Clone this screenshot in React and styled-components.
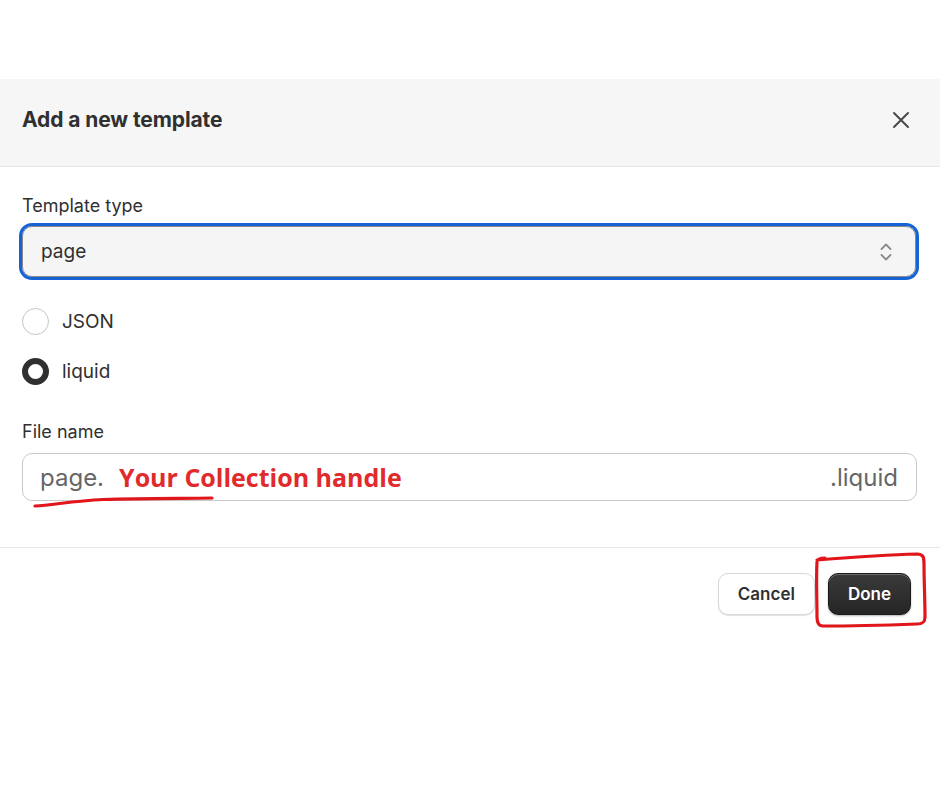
import React from 'react';
import styled, { createGlobalStyle } from 'styled-components';

const GlobalStyle = createGlobalStyle`
  html, body {
    margin: 0;
    padding: 0;
    background: #ffffff;
  }
  body {
    font-family: Inter, "Liberation Sans", sans-serif;
    color: #303030;
  }
  * { box-sizing: border-box; }
`;

function App() {
  return (
    <>
      <GlobalStyle />
      <Page>
        <Dialog>
          <Header>
            <Title>Add a new template</Title>
            <CloseButton aria-label="Close">
              <svg width="18" height="18" viewBox="0 0 18 18">
                <path d="M2 2 L16 16 M16 2 L2 16" stroke="#4a4a4a" strokeWidth="2" strokeLinecap="round" />
              </svg>
            </CloseButton>
          </Header>

          <Body>
            <Label>Template type</Label>
            <Select>
              <SelectValue>page</SelectValue>
              <svg width="14" height="22" viewBox="0 0 14 22">
                <path d="M2.5 8 L7 3.5 L11.5 8 M2.5 14 L7 18.5 L11.5 14" fill="none" stroke="#8a8a8a" strokeWidth="1.8" strokeLinecap="round" strokeLinejoin="round" />
              </svg>
            </Select>

            <RadioGroup>
              <RadioRow>
                <RadioDot />
                <RadioText>JSON</RadioText>
              </RadioRow>
              <RadioRow>
                <RadioDot checked />
                <RadioText>liquid</RadioText>
              </RadioRow>
            </RadioGroup>

            <Label spaced>File name</Label>
            <FileField>
              <Prefix>page.</Prefix>
              <Handle>Your Collection handle</Handle>
              <Suffix>.liquid</Suffix>
              <Underline width="190" height="16" viewBox="0 0 190 16">
                <path d="M2 12 C 20 11, 40 7, 70 5.5 C 110 4, 150 4.5, 179 4" fill="none" stroke="#e0161b" strokeWidth="3.2" strokeLinecap="round" />
              </Underline>
            </FileField>
          </Body>

          <Footer>
            <Button>Cancel</Button>
            <Marked>
              <Button primary>Done</Button>
              <Scribble width="116" height="80" viewBox="0 0 116 80">
                <path
                  d="M4 9 C 30 7, 70 4, 104 3 C 110 3, 111 6, 111 12 C 111 30, 112 50, 112 66 C 112 71, 110 73, 104 73 C 76 74, 40 75, 10 75 C 6 75, 4 72, 4 66 C 4 46, 3 28, 4 11 C 4 8, 6 7, 12 7"
                  fill="none"
                  stroke="#e0161b"
                  strokeWidth="3.2"
                  strokeLinecap="round"
                  strokeLinejoin="round"
                />
              </Scribble>
            </Marked>
          </Footer>
        </Dialog>
      </Page>
    </>
  );
}

export default App;

const Page = styled.div`
  padding-top: 79px;
  min-height: 788px;
  background: #ffffff;
`;

const Dialog = styled.div`
  background: #ffffff;
`;

const Header = styled.div`
  height: 88px;
  background: #f6f6f6;
  border-bottom: 1px solid #e6e6e6;
  display: flex;
  align-items: center;
  justify-content: space-between;
  padding: 0 25px 6px 22px;
`;

const Title = styled.h2`
  margin: 0;
  font-size: 21px;
  font-weight: 650;
  color: #303030;
  letter-spacing: -0.1px;
`;

const CloseButton = styled.button`
  width: 28px;
  height: 28px;
  border: none;
  background: transparent;
  padding: 0;
  display: flex;
  align-items: center;
  justify-content: center;
  cursor: pointer;
`;

const Body = styled.div`
  padding: 27px 23px 46px 22px;
  border-bottom: 1px solid #e6e6e6;
`;

const Label = styled.div`
  font-size: 18px;
  line-height: 24px;
  color: #303030;
  margin-top: ${(p) => (p.spaced ? '35px' : '0')};
`;

const Select = styled.div`
  margin: 8px 1px 0 0;
  height: 51px;
  border: 1.5px solid #8a8a8a;
  border-radius: 10px;
  outline: 3px solid #1663d6;
  outline-offset: 0;
  background: #f5f5f5;
  display: flex;
  align-items: center;
  justify-content: space-between;
  padding: 0 22px 0 18px;
`;

const SelectValue = styled.span`
  font-size: 19px;
  color: #303030;
`;

const RadioGroup = styled.div`
  margin-top: 30px;
  display: flex;
  flex-direction: column;
  gap: 22px;
`;

const RadioRow = styled.label`
  display: flex;
  align-items: center;
  gap: 13px;
  height: 28px;
`;

const RadioDot = styled.span`
  width: 27px;
  height: 27px;
  border-radius: 50%;
  background: #ffffff;
  border: ${(p) => (p.checked ? '6px solid #303030' : '1.5px solid #c4c4c4')};
`;

const RadioText = styled.span`
  font-size: 19px;
  color: #303030;
`;

const FileField = styled.div`
  position: relative;
  margin-top: 9px;
  height: 48px;
  border: 1.5px solid #c9c9c9;
  border-radius: 10px;
  background: #ffffff;
  display: flex;
  align-items: center;
  padding: 0 18px 0 17px;
`;

const Prefix = styled.span`
  font-size: 24px;
  color: #666666;
`;

const Handle = styled.span`
  margin-left: 15px;
  font-family: "Open Sans", "Liberation Sans", sans-serif;
  font-size: 25px;
  font-weight: 700;
  color: #e12a2b;
`;

const Suffix = styled.span`
  margin-left: auto;
  font-size: 24px;
  color: #666666;
`;

const Underline = styled.svg`
  position: absolute;
  left: 10px;
  top: 40px;
`;

const Footer = styled.div`
  height: 92px;
  display: flex;
  align-items: center;
  justify-content: flex-end;
  gap: 13px;
  padding-right: 29px;
`;

const Marked = styled.div`
  position: relative;
  display: flex;
`;

const Button = styled.button`
  height: 42px;
  padding: 0 19px;
  border-radius: 10px;
  font-family: Inter, "Liberation Sans", sans-serif;
  font-size: 17px;
  font-weight: 600;
  cursor: pointer;
  color: ${(p) => (p.primary ? '#ffffff' : '#303030')};
  background: ${(p) => (p.primary ? 'linear-gradient(#3a3a3a, #262626)' : '#ffffff')};
  border: ${(p) => (p.primary ? '1px solid #1a1a1a' : '1px solid #d8d8d8')};
  box-shadow: ${(p) =>
    p.primary
      ? 'inset 0 1px 0 rgba(255,255,255,0.25), 0 1px 2px rgba(0,0,0,0.3)'
      : '0 1px 1px rgba(0,0,0,0.12)'};
`;

const Scribble = styled.svg`
  position: absolute;
  left: -15px;
  top: -22px;
  pointer-events: none;
`;
